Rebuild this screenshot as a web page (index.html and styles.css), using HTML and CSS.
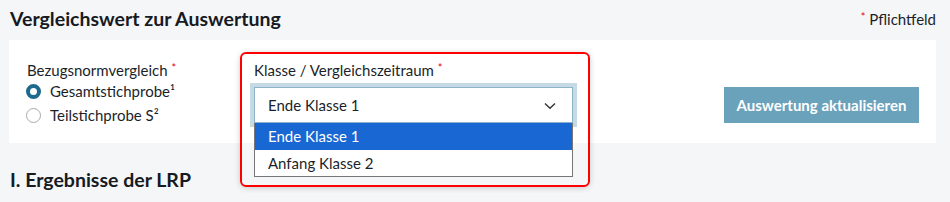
FILE: index.html
```html
<!DOCTYPE html>
<html lang="de">
<head>
<meta charset="utf-8">
<title>Vergleichswert zur Auswertung</title>
<link rel="stylesheet" href="styles.css">
</head>
<body>
  <header class="section-head">
    <h2 class="title">Vergleichswert zur Auswertung</h2>
    <span class="required-note"><span class="star">*</span> Pflichtfeld</span>
  </header>

  <div class="card">
    <fieldset class="radio-group">
      <legend class="label">Bezugsnormvergleich <span class="star">*</span></legend>
      <label class="radio-row"><span class="radio checked"></span>Gesamtstichprobe¹</label>
      <label class="radio-row"><span class="radio"></span>Teilstichprobe S²</label>
    </fieldset>

    <div class="field">
      <div class="highlight"></div>
      <div class="label">Klasse / Vergleichszeitraum <span class="star">*</span></div>
      <div class="select">
        <span>Ende Klasse 1</span>
        <svg class="chevron" width="12" height="8" viewBox="0 0 12 8"><path d="M1 1.5 L6 6.2 L11 1.5" fill="none" stroke="#333" stroke-width="1.4"/></svg>
      </div>
      <ul class="listbox">
        <li class="option selected">Ende Klasse 1</li>
        <li class="option">Anfang Klasse 2</li>
      </ul>
    </div>

    <button class="btn">Auswertung aktualisieren</button>
  </div>

  <h2 class="title second">I. Ergebnisse der LRP</h2>
</body>
</html>
```

FILE: styles.css
```css
* { box-sizing: border-box; }

body {
  margin: 0;
  background: #f5f6f8;
  font-family: Lato, "Noto Sans", sans-serif;
  color: #1b1f2a;
  font-size: 15px;
}

.section-head {
  display: flex;
  justify-content: space-between;
  align-items: flex-start;
  height: 40px;
  padding: 6px 14px 0 10px;
}

.title {
  margin: 0;
  font-size: 19.5px;
  font-weight: 700;
  line-height: 26px;
  color: #161a22;
}

.required-note {
  font-size: 15px;
  line-height: 22px;
}

.star {
  color: #e2001a;
  font-size: 11px;
  vertical-align: 4px;
}

.card {
  margin: 0 14px 0 9px;
  background: #fff;
  height: 103px;
  display: flex;
  align-items: flex-start;
  padding: 19px 17px 0 18px;
}

.radio-group {
  border: 0;
  margin: 0;
  padding: 0;
  width: 227px;
}

.label {
  padding: 0;
  line-height: 18px;
  height: 18px;
}

.radio-row {
  display: flex;
  align-items: center;
  gap: 9px;
  height: 24px;
  margin-left: -1px;
}

.radio-group .label { margin-bottom: 2px; }

.radio {
  width: 15px;
  height: 15px;
  border-radius: 50%;
  border: 1px solid #a9a9a9;
  background: #fff;
  flex: none;
}

.radio.checked {
  border: 4.5px solid #1c6a8c;
}

.field {
  position: relative;
  width: 319px;
}

.field .label { margin-bottom: 10px; }

.highlight {
  position: absolute;
  left: -14px;
  top: -7px;
  width: 350px;
  height: 135px;
  border: 2px solid #ff0000;
  border-radius: 6px;
  box-shadow: 0 1px 6px rgba(0, 0, 0, 0.18);
  pointer-events: none;
}

.select {
  height: 36px;
  border: 1px solid #8cb3c6;
  box-shadow: 0 0 0 4px #c6dae5;
  background: #fff;
  display: flex;
  align-items: center;
  justify-content: space-between;
  padding: 0 16px 0 13px;
}

.chevron { margin-top: 1px; }

.listbox {
  position: absolute;
  left: 0;
  top: 64px;
  width: 319px;
  margin: 0;
  padding: 0;
  list-style: none;
  background: #fff;
  border: 1px solid #767676;
  border-top: 0;
}

.option {
  height: 26.5px;
  line-height: 26px;
  padding-left: 13px;
}

.option.selected {
  background: #1967d2;
  color: #fff;
}

.btn {
  margin-left: auto;
  margin-top: 28px;
  width: 195px;
  height: 36px;
  border: 0;
  background: #6aa1bb;
  color: #fff;
  font-family: inherit;
  font-size: 15px;
  font-weight: 700;
  padding: 0;
}

.second {
  margin: 24px 0 0 10px;
}
```
